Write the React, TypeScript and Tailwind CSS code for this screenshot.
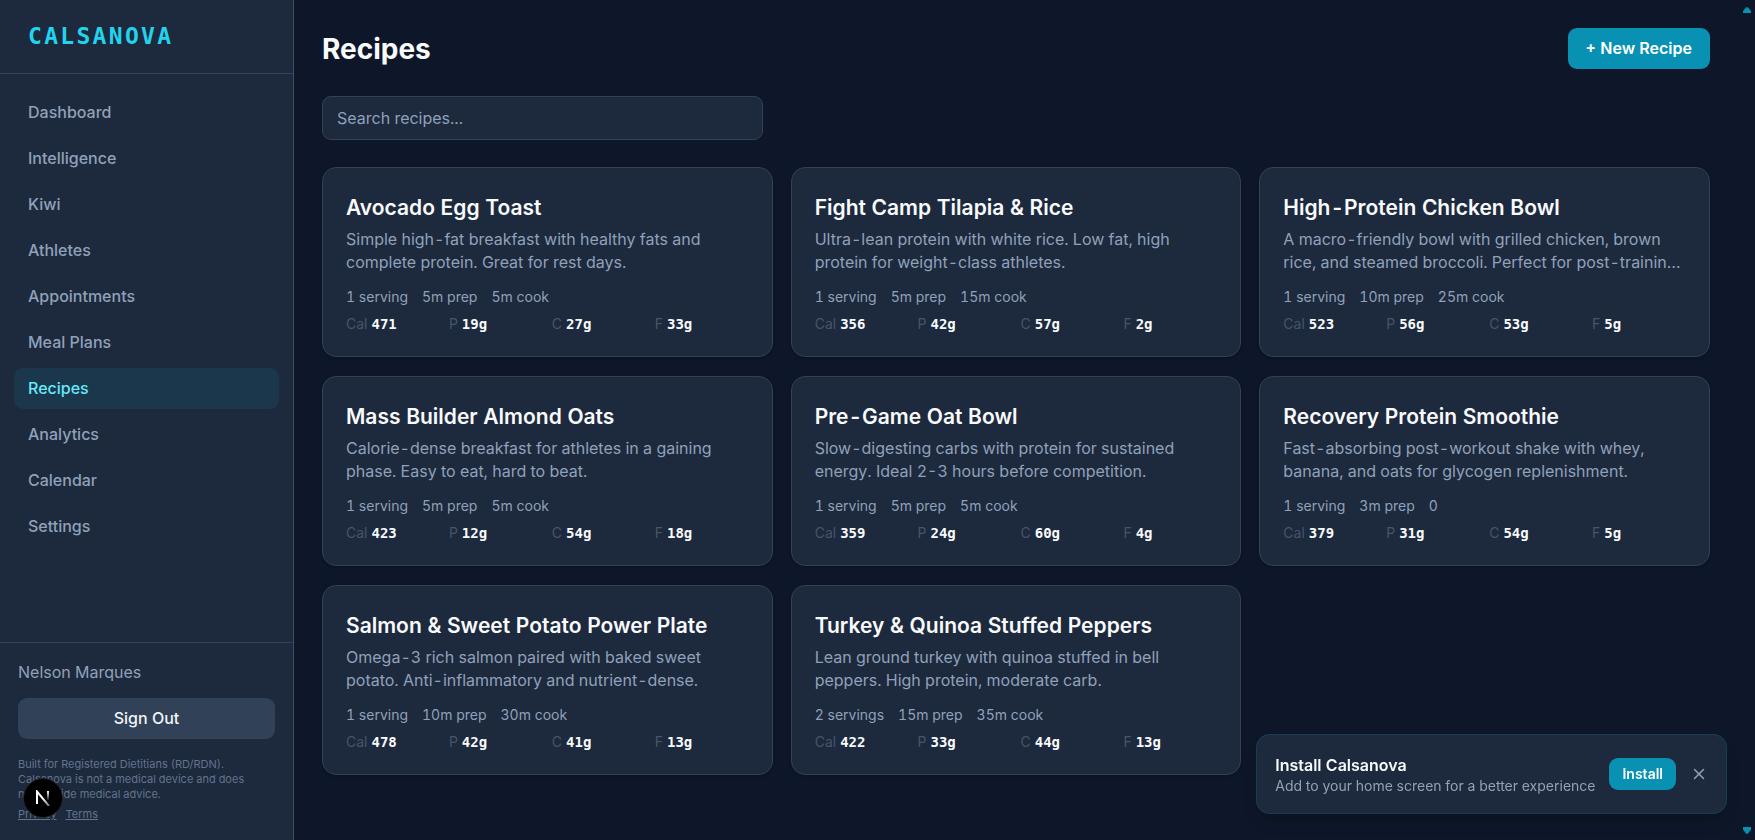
import React from "react";
import { X } from "lucide-react";

type Recipe = {
  name: string;
  description: string;
  meta: string[];
  macros: [string, string][];
};

const navItems = [
  "Dashboard",
  "Intelligence",
  "Kiwi",
  "Athletes",
  "Appointments",
  "Meal Plans",
  "Recipes",
  "Analytics",
  "Calendar",
  "Settings",
];

const recipes: Recipe[] = [
  {
    name: "Avocado Egg Toast",
    description:
      "Simple high-fat breakfast with healthy fats and complete protein. Great for rest days.",
    meta: ["1 serving", "5m prep", "5m cook"],
    macros: [["Cal", "471"], ["P", "19g"], ["C", "27g"], ["F", "33g"]],
  },
  {
    name: "Fight Camp Tilapia & Rice",
    description:
      "Ultra-lean protein with white rice. Low fat, high protein for weight-class athletes.",
    meta: ["1 serving", "5m prep", "15m cook"],
    macros: [["Cal", "356"], ["P", "42g"], ["C", "57g"], ["F", "2g"]],
  },
  {
    name: "High-Protein Chicken Bowl",
    description:
      "A macro-friendly bowl with grilled chicken, brown rice, and steamed broccoli. Perfect for post-trainin…",
    meta: ["1 serving", "10m prep", "25m cook"],
    macros: [["Cal", "523"], ["P", "56g"], ["C", "53g"], ["F", "5g"]],
  },
  {
    name: "Mass Builder Almond Oats",
    description:
      "Calorie-dense breakfast for athletes in a gaining phase. Easy to eat, hard to beat.",
    meta: ["1 serving", "5m prep", "5m cook"],
    macros: [["Cal", "423"], ["P", "12g"], ["C", "54g"], ["F", "18g"]],
  },
  {
    name: "Pre-Game Oat Bowl",
    description:
      "Slow-digesting carbs with protein for sustained energy. Ideal 2-3 hours before competition.",
    meta: ["1 serving", "5m prep", "5m cook"],
    macros: [["Cal", "359"], ["P", "24g"], ["C", "60g"], ["F", "4g"]],
  },
  {
    name: "Recovery Protein Smoothie",
    description:
      "Fast-absorbing post-workout shake with whey, banana, and oats for glycogen replenishment.",
    meta: ["1 serving", "3m prep", "0"],
    macros: [["Cal", "379"], ["P", "31g"], ["C", "54g"], ["F", "5g"]],
  },
  {
    name: "Salmon & Sweet Potato Power Plate",
    description:
      "Omega-3 rich salmon paired with baked sweet potato. Anti-inflammatory and nutrient-dense.",
    meta: ["1 serving", "10m prep", "30m cook"],
    macros: [["Cal", "478"], ["P", "42g"], ["C", "41g"], ["F", "13g"]],
  },
  {
    name: "Turkey & Quinoa Stuffed Peppers",
    description:
      "Lean ground turkey with quinoa stuffed in bell peppers. High protein, moderate carb.",
    meta: ["2 servings", "15m prep", "35m cook"],
    macros: [["Cal", "422"], ["P", "33g"], ["C", "44g"], ["F", "13g"]],
  },
];

function Sidebar() {
  return (
    <aside className="flex w-[294px] shrink-0 flex-col border-r border-slate-600/80 bg-slate-800">
      <div className="border-b border-slate-700 px-7 pt-5 pb-[21px]">
        <a
          href="#"
          className="block font-['DejaVu_Sans_Mono',monospace] text-[23px] leading-8 font-bold tracking-widest text-[#22d3ee]"
        >
          CALSANOVA
        </a>
      </div>
      <nav className="flex flex-1 flex-col gap-[5px] px-[14px] py-[18px]">
        {navItems.map((item) => (
          <a
            key={item}
            href="#"
            className={
              item === "Recipes"
                ? "rounded-[9px] bg-[#06b6d4]/10 px-[14px] py-[9px] text-base leading-[23px] font-medium text-[#67e8f9]"
                : "rounded-[9px] px-[14px] py-[9px] text-base leading-[23px] font-medium text-slate-400"
            }
          >
            {item}
          </a>
        ))}
      </nav>
      <div className="border-t border-slate-700 p-[18px]">
        <p className="text-base leading-[23px] text-slate-400">Nelson Marques</p>
        <button className="mt-[14px] w-full rounded-[9px] bg-slate-700 py-[9px] text-base leading-[23px] font-medium text-slate-100">
          Sign Out
        </button>
        <p className="mt-[18px] text-[11px] leading-[15px] text-slate-500">
          Built for Registered Dietitians (RD/RDN).
          <br />
          Calsanova is not a medical device and does
          <br />
          not provide medical advice.
        </p>
        <div className="mt-[5px] flex gap-[9px] text-[11px] leading-[15px] text-slate-500">
          <a href="#" className="underline">Privacy</a>
          <a href="#" className="underline">Terms</a>
        </div>
      </div>
    </aside>
  );
}

function RecipeCard({ name, description, meta, macros }: Recipe) {
  return (
    <article className="rounded-[14px] border border-slate-700 bg-slate-800 p-[23px] shadow-sm shadow-black/20">
      <h2 className="truncate text-[21px] leading-[33px] font-semibold text-slate-50">{name}</h2>
      <p className="mt-1 line-clamp-2 text-base leading-[23px] text-slate-400">
        {description}
      </p>
      <div className="mt-[14px] flex gap-[14px] text-sm leading-[18px] text-slate-400">
        {meta.map((m) => (
          <span key={m}>{m}</span>
        ))}
      </div>
      <div className="mt-[9px] grid grid-cols-4 gap-[9px] text-sm leading-[18px]">
        {macros.map(([label, value]) => (
          <div key={label} className="flex gap-1">
            <span className="text-slate-600">{label}</span>
            <span className="font-['DejaVu_Sans_Mono',monospace] font-bold text-slate-50">
              {value}
            </span>
          </div>
        ))}
      </div>
    </article>
  );
}

function InstallPrompt() {
  return (
    <div className="fixed right-7 bottom-[26px] flex items-center gap-[14px] rounded-[14px] border border-[#06b6d4]/15 bg-slate-800 p-[18px] shadow-lg shadow-black/20">
      <div>
        <p className="text-base leading-6 font-semibold text-slate-50">Install Calsanova</p>
        <p className="text-sm leading-[18px] text-slate-400">
          Add to your home screen for a better experience
        </p>
      </div>
      <button className="rounded-[9px] bg-[#0891b2] px-[13px] py-[7px] text-sm leading-[18px] font-semibold text-white">
        Install
      </button>
      <button aria-label="Dismiss" className="text-slate-400">
        <X size={18} strokeWidth={2} />
      </button>
    </div>
  );
}

function DevBadge() {
  return (
    <button
      aria-label="Open dev tools"
      className="fixed bottom-[22px] left-[23px] flex size-10 items-center justify-center rounded-full border border-neutral-800 bg-black"
    >
      <svg width="16" height="16" viewBox="0 0 16 16" fill="none">
        <defs>
          <linearGradient id="diag" x1="8" y1="8" x2="14" y2="16" gradientUnits="userSpaceOnUse">
            <stop stopColor="#fff" />
            <stop offset="0.9" stopColor="#fff" stopOpacity="0.5" />
          </linearGradient>
          <linearGradient id="stem" x1="13" y1="1" x2="13" y2="11" gradientUnits="userSpaceOnUse">
            <stop stopColor="#fff" />
            <stop offset="1" stopColor="#fff" stopOpacity="0" />
          </linearGradient>
        </defs>
        <path d="M2 14V1.500L14 16" stroke="url(#diag)" strokeWidth="2" />
        <path d="M2 14V1.500" stroke="#fff" strokeWidth="2" />
        <path d="M13 1V11" stroke="url(#stem)" strokeWidth="2" />
      </svg>
    </button>
  );
}

// gutter with the two arrow buttons, nothing to scroll so no thumb
function ScrollGutter() {
  return (
    <div className="flex w-[17px] shrink-0 flex-col items-center justify-between py-[6px] text-[#0891b2]">
      <svg width="10" height="8" viewBox="0 0 10 8" fill="currentColor">
        <path d="M4.200 1.200H5.800L9 5V7H1V5Z" />
      </svg>
      <svg width="10" height="8" viewBox="0 0 10 8" fill="currentColor">
        <path d="M4.200 7.800H5.800L9 3.500V1H1V3.500Z" />
      </svg>
    </div>
  );
}

export default function App() {
  return (
    <div className="flex min-h-screen bg-[#0e172a] font-[Inter,sans-serif] tabular-nums">
      <Sidebar />
      <main className="min-w-0 flex-1 p-7">
        <div className="flex items-center justify-between">
          <h1 className="text-[28px] leading-9 font-bold text-slate-50">Recipes</h1>
          <button className="rounded-[9px] bg-[#0891b2] px-[18px] py-[9px] text-base leading-[23px] font-semibold text-white">
            + New Recipe
          </button>
        </div>
        <input
          type="search"
          aria-label="Search recipes"
          placeholder="Search recipes..."
          className="mt-[27px] block w-full max-w-[441px] rounded-[9px] border border-slate-700 bg-slate-800 px-[14px] py-[9px] text-base leading-6 text-slate-50 placeholder:text-slate-400"
        />
        <div className="mt-[27px] grid grid-cols-3 gap-x-[18px] gap-y-[19px]">
          {recipes.map((recipe) => (
            <RecipeCard key={recipe.name} {...recipe} />
          ))}
        </div>
      </main>
      <ScrollGutter />
      <InstallPrompt />
      <DevBadge />
    </div>
  );
}
